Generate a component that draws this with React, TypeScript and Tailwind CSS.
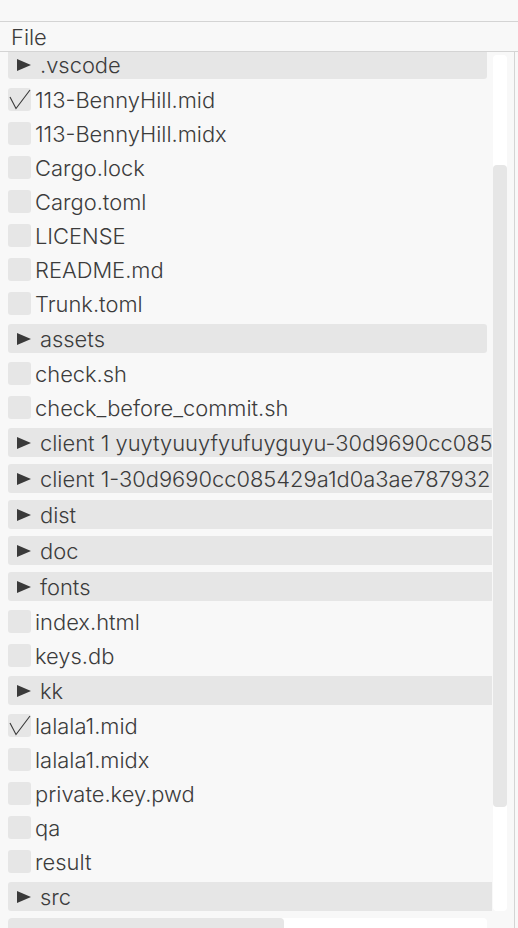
import React from "react";

type Item = { kind: "dir" | "file"; name: string; checked?: boolean; short?: boolean };

const items: Item[] = [
  { kind: "dir", name: ".vscode", short: true },
  { kind: "file", name: "113-BennyHill.mid", checked: true },
  { kind: "file", name: "113-BennyHill.midx" },
  { kind: "file", name: "Cargo.lock" },
  { kind: "file", name: "Cargo.toml" },
  { kind: "file", name: "LICENSE" },
  { kind: "file", name: "README.md" },
  { kind: "file", name: "Trunk.toml" },
  { kind: "dir", name: "assets", short: true },
  { kind: "file", name: "check.sh" },
  { kind: "file", name: "check_before_commit.sh" },
  { kind: "dir", name: "client 1 yuytyuuyfyufuyguyu-30d9690cc085429a1d0a3ae787932" },
  { kind: "dir", name: "client 1-30d9690cc085429a1d0a3ae787932" },
  { kind: "dir", name: "dist" },
  { kind: "dir", name: "doc" },
  { kind: "dir", name: "fonts" },
  { kind: "file", name: "index.html" },
  { kind: "file", name: "keys.db" },
  { kind: "dir", name: "kk" },
  { kind: "file", name: "lalala1.mid", checked: true },
  { kind: "file", name: "lalala1.midx" },
  { kind: "file", name: "private.key.pwd" },
  { kind: "file", name: "qa" },
  { kind: "file", name: "result" },
  { kind: "dir", name: "src" },
];

function Triangle() {
  return (
    <svg width="14" height="12" viewBox="0 0 14 12" className="shrink-0">
      <polygon points="0,0 14,6 0,12" fill="#3a3a3a" />
    </svg>
  );
}

function Check() {
  return (
    <svg width="23" height="23" viewBox="0 0 23 23" className="absolute left-0 top-0">
      <polyline points="2,9 8,20.5 22,2" fill="none" stroke="#3a3a3a" strokeWidth="1.1" />
    </svg>
  );
}

function Row({ item }: { item: Item }) {
  if (item.kind === "dir") {
    return (
      <div
        className={
          "h-[29px] shrink-0 flex items-center rounded-[3px] bg-[#e6e6e6] pl-[9px] whitespace-nowrap " +
          (item.short ? "w-[479px]" : "w-[560px]")
        }
      >
        <Triangle />
        <span className="ml-[9px] pt-[2px]">{item.name}</span>
      </div>
    );
  }
  return (
    <div className="h-[27px] shrink-0 flex items-center whitespace-nowrap">
      <div className="relative w-[23px] h-[23px] rounded-[3px] bg-[#e6e6e6] shrink-0">
        {item.checked && <Check />}
      </div>
      <span className="ml-[4px] pt-[2px]">{item.name}</span>
    </div>
  );
}

export default function App() {
  return (
    <div
      className="w-[518px] h-[928px] overflow-hidden bg-[#f8f8f8] text-[#3c3c3c] text-[21.9px] font-light leading-none flex flex-col"
      style={{ fontFamily: "Inter, 'Noto Sans', sans-serif" }}
    >
      <div className="h-[22px] shrink-0 border-b border-[#d4d4d4]" />
      <div className="h-[30px] shrink-0 border-b border-[#d4d4d4] flex items-center pl-[11px]">
        <span className="pt-[2px]">File</span>
      </div>
      <div className="flex flex-1 min-h-0 pl-[8px]">
        <div className="w-[484px] flex flex-col shrink-0">
          <div className="h-[866px] overflow-hidden shrink-0">
            <div className="flex flex-col gap-[7px] -mt-[2px]">
              {items.map((it, i) => (
                <Row key={i} item={it} />
              ))}
            </div>
          </div>
          <div className="w-[479px] h-[14px] rounded-[4px] bg-white shrink-0">
            <div className="w-[276px] h-full rounded-[4px] bg-[#e6e6e6]" />
          </div>
        </div>
        <div className="ml-[1px] w-[14px] shrink-0 mt-[3px] h-[856px] rounded-[4px] bg-white">
          <div className="mt-[110px] h-[642px] rounded-[4px] bg-[#e6e6e6]" />
        </div>
        <div className="ml-[7px] w-px bg-[#d4d4d4] shrink-0" />
      </div>
    </div>
  );
}
